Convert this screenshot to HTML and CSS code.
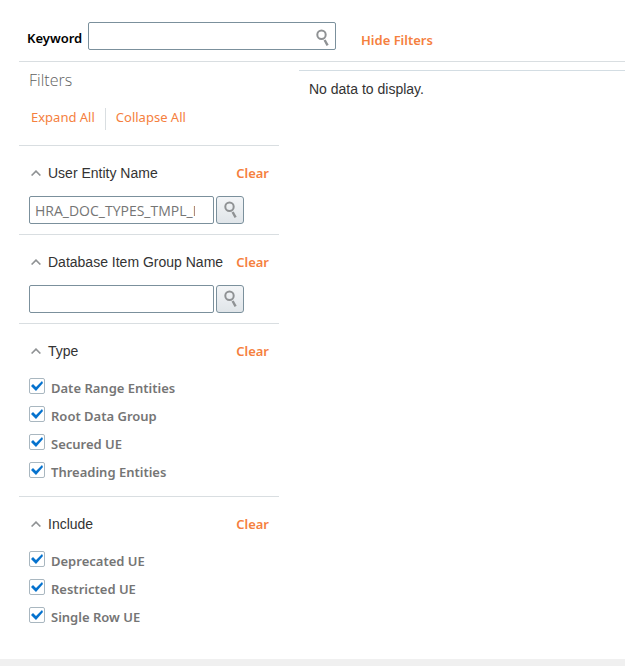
FILE: index.html
```html
<!DOCTYPE html>
<html lang="en">
<head>
<meta charset="utf-8">
<meta name="viewport" content="width=device-width, initial-scale=1">
<title>Database Items</title>
<link rel="stylesheet" href="styles.css">
</head>
<body>
<svg class="symbols" aria-hidden="true">
  <symbol id="magnifier" viewBox="0 0 14 18"><circle cx="5.5" cy="5.7" r="4.2" fill="none" stroke="#8f9294" stroke-width="2"/><path d="M8.600 11l3 5.400" fill="none" stroke="#8f9294" stroke-width="2.400"/></symbol>
  <symbol id="chevron" viewBox="0 0 10 6"><path d="M.6 5.500L5 1.100l4.400 4.400" fill="none" stroke="#8f9294" stroke-width="1.600"/></symbol>
</svg>
<div class="page">
  <form class="toolbar">
    <label class="keyword-label" for="keyword">Keyword</label>
    <div class="keyword">
      <input class="field keyword-input" id="keyword" type="text">
      <button class="keyword-search" type="button" aria-label="Search"><svg class="magnifier"><use href="#magnifier"/></svg></button>
    </div>
    <a class="link hide-filters" href="#">Hide Filters</a>
  </form>
  <div class="content">
    <aside class="filters">
      <h2 class="filters-title">Filters</h2>
      <div class="actions">
        <a class="action" href="#">Expand All</a>
        <a class="action" href="#">Collapse All</a>
      </div>
      <section class="group">
        <div class="group-header">
          <button class="toggle" type="button"><svg class="chevron"><use href="#chevron"/></svg>User Entity Name</button>
          <a class="link" href="#">Clear</a>
        </div>
        <div class="lookup">
          <input class="field lookup-input" type="text" aria-label="User Entity Name" value="HRA_DOC_TYPES_TMPL_DETAILS">
          <button class="lookup-button" type="button" aria-label="Search"><svg class="magnifier"><use href="#magnifier"/></svg></button>
        </div>
      </section>
      <section class="group">
        <div class="group-header">
          <button class="toggle" type="button"><svg class="chevron"><use href="#chevron"/></svg>Database Item Group Name</button>
          <a class="link" href="#">Clear</a>
        </div>
        <div class="lookup">
          <input class="field lookup-input" type="text" aria-label="Database Item Group Name">
          <button class="lookup-button" type="button" aria-label="Search"><svg class="magnifier"><use href="#magnifier"/></svg></button>
        </div>
      </section>
      <section class="group">
        <div class="group-header">
          <button class="toggle" type="button"><svg class="chevron"><use href="#chevron"/></svg>Type</button>
          <a class="link" href="#">Clear</a>
        </div>
        <label class="option"><input class="check" type="checkbox" checked>Date Range Entities</label>
        <label class="option"><input class="check" type="checkbox" checked>Root Data Group</label>
        <label class="option"><input class="check" type="checkbox" checked>Secured UE</label>
        <label class="option"><input class="check" type="checkbox" checked>Threading Entities</label>
      </section>
      <section class="group">
        <div class="group-header">
          <button class="toggle" type="button"><svg class="chevron"><use href="#chevron"/></svg>Include</button>
          <a class="link" href="#">Clear</a>
        </div>
        <label class="option"><input class="check" type="checkbox" checked>Deprecated UE</label>
        <label class="option"><input class="check" type="checkbox" checked>Restricted UE</label>
        <label class="option"><input class="check" type="checkbox" checked>Single Row UE</label>
      </section>
    </aside>
    <main class="results">No data to display.</main>
  </div>
  <footer class="footer"></footer>
</div>
</body>
</html>
```
FILE: styles.css
```css
* {
  box-sizing: border-box;
}

body {
  margin: 0;
  background: #fff;
  color: #333;
  font: 600 13px/20px "Noto Sans", "Open Sans", sans-serif;
}

.symbols {
  position: absolute;
  width: 0;
  height: 0;
}

.page {
  display: flex;
  flex-direction: column;
  min-height: 100vh;
}

.toolbar {
  display: flex;
  align-items: center;
  margin-left: 19px;
  padding: 22px 0 11px 8px;
  border-bottom: 1px solid #d9dee1;
}

.keyword-label {
  flex: 0 0 61px;
  padding-top: 4px;
  color: #000;
}

.keyword {
  position: relative;
  width: 248px;
}

.field {
  display: block;
  height: 28px;
  border: 1px solid #7b909c;
  border-radius: 2px;
  background: #fff;
  color: #757575;
  font: 500 14px/20px "Open Sans", sans-serif;
}

.keyword-input {
  width: 100%;
  padding: 0 28px 0 6px;
}

.keyword-search {
  position: absolute;
  top: 7px;
  right: 6px;
  padding: 0;
  border: 0;
  background: none;
}

.magnifier {
  display: block;
  width: 14px;
  height: 18px;
}

.link,
.action {
  color: #f5803e;
  text-decoration: none;
}

.hide-filters {
  margin-left: 25px;
  padding-top: 8px;
}

.content {
  display: flex;
  flex: 1;
  gap: 20px;
  margin-left: 19px;
}

.filters {
  flex: 0 0 260px;
  padding-bottom: 18px;
}

.filters-title {
  margin: 0;
  padding: 6px 10px 0;
  color: #5f5f5f;
  font-family: "Open Sans", sans-serif;
  font-size: 16px;
  font-weight: 300;
  line-height: 24px;
}

.actions {
  display: flex;
  padding: 16px 2px 15px;
}

.action {
  height: 22px;
  padding: 0 10px;
  font-weight: 400;
  line-height: 18px;
}

.action + .action {
  border-left: 1px solid #d9dee1;
}

.group {
  padding: 17px 10px 10px;
  border-top: 1px solid #d9dee1;
}

.group-header {
  display: flex;
  justify-content: space-between;
  margin-bottom: 13px;
}

.toggle {
  display: flex;
  align-items: center;
  gap: 7px;
  padding: 0 0 0 2px;
  border: 0;
  background: none;
  color: #333;
  font: 14px/20px "Liberation Sans", Arial, sans-serif;
}

.chevron {
  width: 10px;
  height: 6px;
}

.lookup {
  display: flex;
  gap: 2px;
}

.lookup-input {
  width: 185px;
  padding: 0 18px 0 5px;
}

.lookup-button {
  display: flex;
  align-items: center;
  justify-content: center;
  width: 28px;
  height: 28px;
  padding: 0 0 0 2px;
  border: 1px solid #7b909c;
  border-radius: 3px;
  background: linear-gradient(#f3f5f7, #e0e5e9);
}

.option {
  display: flex;
  gap: 6px;
  height: 28px;
  color: #757575;
  line-height: 28px;
}

.check {
  flex: none;
  width: 16px;
  height: 16px;
  margin: 4px 0 0;
  appearance: none;
  border: 1px solid #a9b7c0;
  border-radius: 2px;
  background: #fff;
}

.check:checked::before {
  content: "";
  display: block;
  width: 14px;
  height: 14px;
  background: #0572ce;
  clip-path: polygon(1px 7px, 3px 5px, 6px 8px, 12px 2px, 13px 4px, 6px 12px);
}

.results {
  flex: 1;
  margin-top: 8px;
  padding: 8px 10px;
  border-top: 1px solid #d3dde3;
  font: 14px/20px "Liberation Sans", Arial, sans-serif;
}

.footer {
  height: 7px;
  background: #f0f0f0;
}
```
